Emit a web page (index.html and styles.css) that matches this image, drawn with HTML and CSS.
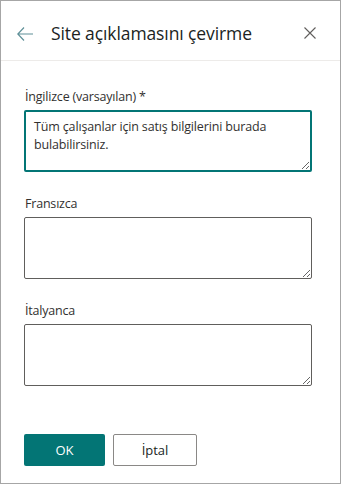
FILE: index.html
```html
<!DOCTYPE html>
<html lang="tr">
<head>
<meta charset="utf-8">
<link rel="stylesheet" href="styles.css">
</head>
<body>
<div class="panel">
  <div class="header">
    <button class="icon-btn back" aria-label="Geri">
      <svg width="16" height="14" viewBox="0 0 16 14"><path d="M7 0.5 L0.8 7 L7 13.5 M0.8 7 H16" fill="none" stroke="#5f9098" stroke-width="1.2"/></svg>
    </button>
    <h1 class="title">Site açıklamasını çevirme</h1>
    <button class="icon-btn close" aria-label="Kapat">
      <svg width="12" height="12" viewBox="0 0 12 12"><path d="M0.5 0.5 L11.5 11.5 M11.5 0.5 L0.5 11.5" fill="none" stroke="#605e5c" stroke-width="1.1"/></svg>
    </button>
  </div>
  <div class="content">
    <div class="field">
      <label class="label">İngilizce (varsayılan) <span class="req">*</span></label>
      <textarea class="input active">Tüm çalışanlar için satış bilgilerini burada bulabilirsiniz.</textarea>
    </div>
    <div class="field">
      <label class="label">Fransızca</label>
      <textarea class="input"></textarea>
    </div>
    <div class="field">
      <label class="label">İtalyanca</label>
      <textarea class="input"></textarea>
    </div>
  </div>
  <div class="footer">
    <button class="btn primary">OK</button>
    <button class="btn secondary">İptal</button>
  </div>
</div>
</body>
</html>
```
FILE: styles.css
```css
html, body {
  margin: 0;
  padding: 0;
  background: #ffffff;
}
body {
  font-family: "Open Sans", "Noto Sans", sans-serif;
  color: #323130;
}
.panel {
  width: 341px;
  height: 484px;
  box-sizing: border-box;
  border: 1px solid #a6a6a6;
  display: flex;
  flex-direction: column;
}
.header {
  height: 59px;
  border-bottom: 1px solid #edebe9;
  display: flex;
  align-items: center;
  padding: 0 0 0 16px;
  box-sizing: content-box;
}
.icon-btn {
  background: none;
  border: none;
  padding: 0;
  display: flex;
  align-items: center;
  justify-content: center;
  cursor: pointer;
}
.back {
  width: 16px;
  height: 14px;
  margin-top: 6px;
}
.title {
  margin: 0 0 0 18px;
  font-size: 17.5px;
  font-weight: 400;
  color: #201f1e;
  letter-spacing: -0.1px;
  flex: 1;
  padding-top: 4px;
}
.close {
  width: 12px;
  height: 12px;
  margin-right: 24px;
  margin-top: 5px;
}
.content {
  padding: 27px 0 0 23px;
  display: flex;
  flex-direction: column;
  gap: 23px;
}
.field {
  display: flex;
  flex-direction: column;
}
.label {
  font-size: 12.5px;
  line-height: 18px;
  color: #323130;
  padding: 0 0 4px 1px;
  letter-spacing: -0.2px;
}
.req {
  color: #323130;
}
.input {
  width: 288px;
  height: 62px;
  box-sizing: border-box;
  border: 1px solid #605e5c;
  border-radius: 2px;
  font-family: inherit;
  font-size: 12.5px;
  line-height: 18px;
  color: #323130;
  padding: 6px 9px;
  margin: 0;
  resize: vertical;
  outline: none;
  letter-spacing: -0.15px;
}
.input.active {
  height: 62px;
  border: 2px solid #037575;
  padding: 6px 8px;
}
.footer {
  margin-top: auto;
  display: flex;
  gap: 8px;
  padding: 0 0 17px 23px;
}
.btn {
  height: 32px;
  border-radius: 2px;
  font-family: inherit;
  font-size: 13px;
  padding: 0;
  cursor: pointer;
}
.primary {
  width: 81px;
  background: #037575;
  color: #ffffff;
  border: none;
}
.secondary {
  width: 84px;
  background: #ffffff;
  color: #201f1e;
  border: 1px solid #8a8886;
}
```
